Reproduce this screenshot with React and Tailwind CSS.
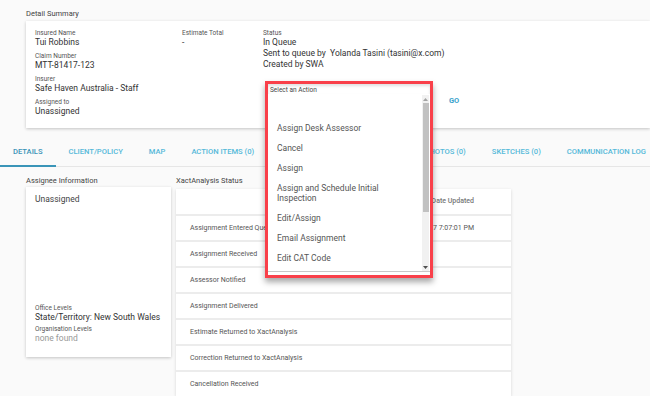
import React from "react";

function Field({ label, children }) {
  return (
    <div className="mb-[4px]">
      <div className="text-[6.5px] leading-[8px] text-[#555]">{label}</div>
      <div className="text-[8.5px] leading-[11px] text-[#333]">{children}</div>
    </div>
  );
}

const tabs = [
  "DETAILS",
  "CLIENT/POLICY",
  "MAP",
  "ACTION ITEMS (0)",
  "NOTES (0)",
  "DOCUMENTS (0)",
  "PHOTOS (0)",
  "SKETCHES (0)",
  "COMMUNICATION LOG",
];

const rows = [
  ["Assignment Entered Queue", "28/11/2017 7:07:01 PM"],
  ["Assignment Received", ""],
  ["Assessor Notified", ""],
  ["Assignment Delivered", ""],
  ["Estimate Returned to XactAnalysis", ""],
  ["Correction Returned to XactAnalysis", ""],
  ["Cancellation Received", ""],
];

const options = [
  "Assign Desk Assessor",
  "Cancel",
  "Assign",
  "Assign and Schedule Initial Inspection",
  "Edit/Assign",
  "Email Assignment",
  "Edit CAT Code",
];

export default function App() {
  return (
    <div className="w-[650px] h-[396px] overflow-hidden bg-[#fafafa] font-[Roboto,sans-serif] text-[#333]">
      <div className="pt-[10px]">
        <div className="ml-[26px] text-[7.5px] leading-[8px] text-[#444]">Detail Summary</div>
        <div className="ml-[26px] mt-[3px] h-[107px] bg-white shadow-[0_1px_3px_rgba(0,0,0,0.22)] pt-[8px] pl-[9px] flex">
          <div className="w-[147px]">
            <Field label="Insured Name">Tui Robbins</Field>
            <Field label="Claim Number">MTT-81417-123</Field>
            <Field label="Insurer">Safe Haven Australia - Staff</Field>
            <Field label="Assigned to">Unassigned</Field>
          </div>
          <div className="w-[81px]">
            <Field label="Estimate Total">-</Field>
          </div>
          <div className="flex-1">
            <div className="text-[6.5px] leading-[8px] text-[#555]">Status</div>
            <div className="text-[8.5px] leading-[11px] text-[#333]">
              <div>In Queue</div>
              <div>Sent to queue by&nbsp; Yolanda Tasini (tasini@x.com)</div>
              <div>Created by SWA</div>
            </div>
            <div className="mt-[11px] ml-[2px] flex items-start">
              <div className="relative w-[168px] h-[28px]">
                <div className="absolute top-0 left-0 z-20 w-[168px] h-[197px] border-[3px] border-[#f9404a] bg-white shadow-[0_4px_6px_rgba(0,0,0,0.35)] flex flex-col">
                  <div className="px-[2px] pt-[2px] text-[6.5px] leading-[8px] text-[#444] shadow-[inset_0_2px_3px_rgba(0,0,0,0.12)]">
                    Select an Action
                  </div>
                  <div className="mt-[1px] h-[177px] flex border-b border-[#c8c8c8]">
                    <div className="flex-1 pt-[3px] pl-[9px] pr-[6px] overflow-hidden">
                      <div className="h-[20px]"></div>
                      {options.map((o) => (
                        <div key={o} className="py-[5px] text-[8.5px] leading-[10px] text-[#555]">
                          {o}
                        </div>
                      ))}
                    </div>
                    <div className="w-[7px] mr-[1px] bg-[#f1f1f1] flex flex-col">
                      <div className="h-[8px] flex items-center justify-center">
                        <svg width="5" height="3" viewBox="0 0 5 3"><path d="M0 3 L2.5 0 L5 3 Z" fill="#a3a3a3" /></svg>
                      </div>
                      <div className="h-[109px] mx-[0.5px] bg-[#c1c1c1]"></div>
                      <div className="flex-1"></div>
                      <div className="h-[8px] flex items-center justify-center">
                        <svg width="5" height="3" viewBox="0 0 5 3"><path d="M0 0 L2.5 3 L5 0 Z" fill="#505050" /></svg>
                      </div>
                    </div>
                  </div>
                </div>
              </div>
              <div className="ml-[16px] mt-[16px] text-[7.5px] leading-[8px] font-bold text-[#3aa3cc]">GO</div>
            </div>
          </div>
        </div>
      </div>

      <div className="mt-[10px] flex h-[29px] border-b border-[#e6e6e6] whitespace-nowrap">
        {tabs.map((t, i) => (
          <div
            key={t}
            className={
              i === 0
                ? "-mb-px flex items-center px-[13px] border-b-2 border-[#3a95b8] text-[7.6px] font-medium text-[#3a94b8]"
                : "-mb-px flex items-center px-[13px] border-b-2 border-transparent text-[7.6px] font-medium text-[#55b9d9]"
            }
          >
            {t}
          </div>
        ))}
      </div>

      <div className="mt-[10px] flex px-[26px]">
        <div className="w-[145px] shrink-0">
          <div className="text-[7.5px] leading-[8px] text-[#444]">Assignee Information</div>
          <div className="mt-[2px] h-[170px] bg-white shadow-[0_1px_3px_rgba(0,0,0,0.22)] pl-[9px] pt-[7px] pb-[13px] flex flex-col">
            <div className="text-[8.5px] leading-[11px] text-[#444]">Unassigned</div>
            <div className="mt-auto">
              <div className="text-[6.5px] leading-[8px] text-[#555]">Office Levels</div>
              <div className="text-[8.5px] leading-[11px] text-[#333]">State/Territory: New South Wales</div>
              <div className="mt-[2px] text-[6.5px] leading-[8px] text-[#555]">Organisation Levels</div>
              <div className="text-[8.5px] leading-[11px] text-[#999]">none found</div>
            </div>
          </div>
        </div>
        <div className="ml-[5px] w-[335px] shrink-0">
          <div className="text-[7.5px] leading-[8px] text-[#444]">XactAnalysis Status</div>
          <div className="mt-[4px] flex flex-col gap-[2px] bg-[#ececec] shadow-[0_1px_3px_rgba(0,0,0,0.15)]">
            <div className="h-[25px] bg-white flex items-center pl-[14px] pr-[37px]">
              <div className="flex-1"></div>
              <div className="text-[7px] font-medium text-[#777]">Date Updated</div>
            </div>
            {rows.map(([n, d]) => (
              <div key={n} className="h-[24px] bg-white flex items-center pl-[14px] pr-[37px]">
                <div className="flex-1 text-[7px] text-[#555]">{n}</div>
                <div className="text-[7px] text-[#555]">{d}</div>
              </div>
            ))}
          </div>
        </div>
      </div>
    </div>
  );
}
